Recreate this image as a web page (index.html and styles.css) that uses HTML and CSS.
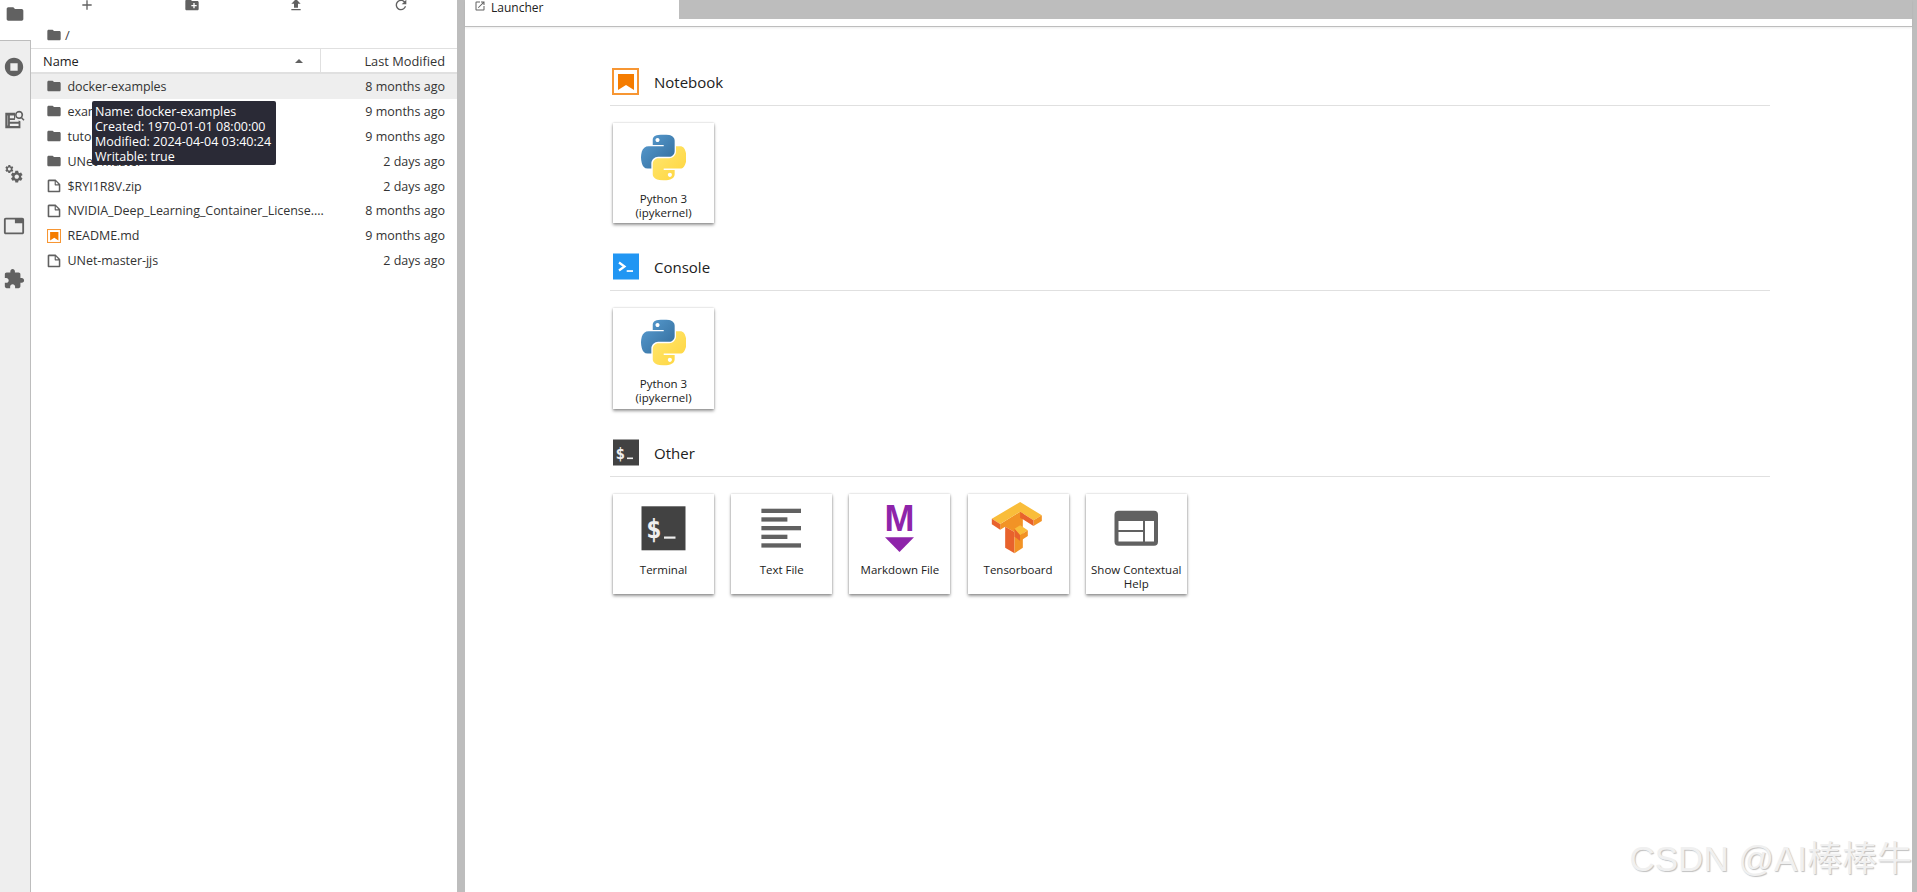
FILE: index.html
```html
<!DOCTYPE html>
<html lang="en">
<head>
<meta charset="utf-8">
<title>JupyterLab</title>
<link rel="stylesheet" href="styles.css">
</head>
<body>
<svg class="defs" width="0" height="0">
  <defs>
    <linearGradient id="pyb" x1="0" y1="0" x2="1" y2="1"><stop offset="0" stop-color="#5a9fd4"/><stop offset="1" stop-color="#306998"/></linearGradient>
    <linearGradient id="pyy" x1="0" y1="0" x2="1" y2="1"><stop offset="0" stop-color="#ffe873"/><stop offset="1" stop-color="#ffd43b"/></linearGradient>
    <symbol id="python" viewBox="0 0 110 112">
      <path fill="url(#pyb)" d="M54.9 0C50.3 0 46 .4 42.1 1.1 30.8 3.1 28.7 7.3 28.7 15v10.2h26.8v3.4H18.6c-7.8 0-14.6 4.7-16.7 13.6-2.5 10.2-2.6 16.6 0 27.3 1.9 7.9 6.5 13.6 14.2 13.6h9.2V71c0-8.8 7.7-16.7 16.8-16.7h26.8c7.4 0 13.4-6.1 13.4-13.6V15.2c0-7.3-6.1-12.7-13.4-13.9C64.3.3 59.5 0 54.9 0zM40.4 8.2c2.8 0 5 2.3 5 5.1 0 2.8-2.3 5.1-5 5.1-2.8 0-5-2.3-5-5.1 0-2.8 2.2-5.1 5-5.1z"/>
      <path fill="url(#pyy)" d="M85.6 28.7v11.9c0 9.2-7.8 17-16.7 17H42.1c-7.3 0-13.4 6.3-13.4 13.6v25.5c0 7.3 6.3 11.5 13.4 13.6 8.5 2.5 16.6 2.9 26.8 0 6.8-2 13.4-5.9 13.4-13.6V86.5H55.5v-3.4h40.2c7.8 0 10.7-5.4 13.4-13.6 2.8-8.4 2.7-16.5 0-27.3-1.9-7.8-5.6-13.6-13.4-13.6zM70.6 93.3c2.8 0 5 2.3 5 5.1 0 2.8-2.3 5.1-5 5.1-2.8 0-5-2.3-5-5.1 0-2.8 2.2-5.1 5-5.1z"/>
    </symbol>
    <symbol id="folder" viewBox="0 0 24 24"><path d="M10 4H4c-1.1 0-1.99.9-1.99 2L2 18c0 1.1.9 2 2 2h16c1.1 0 2-.9 2-2V8c0-1.1-.9-2-2-2h-8l-2-2z"/></symbol>
    <symbol id="file" viewBox="0 0 22 22"><path d="M19.3 8.2l-5.5-5.5c-.3-.3-.7-.5-1.2-.5H3.9c-.8.1-1.6.9-1.6 1.8v14.1c0 .9.7 1.6 1.6 1.6h14.2c.9 0 1.6-.7 1.600-1.600V9.400c.1-.5-.1-.9-.4-1.200zm-5.800-3.300l3.400 3.600h-3.400V4.900zm3.900 12.700H4.700c-.1 0-.2 0-.2-.2V4.700c0-.2.1-.3.2-.3h7.200v4.400s0 .8.300 1.100c.3.3 1.100.3 1.100.3h4.300v7.200s-.1.2-.2.2z"/></symbol>
    <symbol id="notebook" viewBox="0 0 27 27"><rect x="1" y="1" width="25" height="25" fill="none" stroke="#f57c00" stroke-opacity=".8" stroke-width="2"/><path fill="#f57c00" d="M6 6h16v16l-8-5-8 5z"/></symbol>
    <symbol id="gear" viewBox="0 0 24 24"><path d="M19.14 12.94c.04-.3.06-.61.06-.94 0-.32-.02-.64-.07-.94l2.03-1.58c.18-.14.23-.41.12-.61l-1.92-3.32c-.12-.22-.37-.29-.59-.22l-2.39.96c-.5-.38-1.03-.7-1.62-.94l-.36-2.54c-.04-.24-.24-.41-.48-.41h-3.84c-.24 0-.43.17-.47.41l-.36 2.54c-.59.24-1.13.57-1.62.94l-2.39-.96c-.22-.08-.47 0-.59.22L2.74 8.87c-.12.21-.08.47.12.61l2.03 1.58c-.05.3-.09.63-.09.94s.02.64.07.94l-2.03 1.58c-.18.14-.23.41-.12.61l1.92 3.32c.12.22.37.29.59.22l2.39-.96c.5.38 1.03.7 1.62.94l.36 2.54c.05.24.24.41.48.41h3.84c.24 0 .44-.17.47-.41l.36-2.54c.59-.24 1.13-.56 1.62-.94l2.39.96c.22.08.47 0 .59-.22l1.92-3.32c.12-.22.07-.47-.12-.61l-2.01-1.58zM12 15.6c-1.98 0-3.6-1.62-3.6-3.6s1.62-3.6 3.6-3.6 3.6 1.62 3.6 3.6-1.62 3.6-3.6 3.6z"/></symbol>
  </defs>
</svg>

<div class="app">
  <nav class="rail">
    <div class="rail-top">
      <svg class="rail-icon" viewBox="0 0 24 24"><use href="#folder"/></svg>
    </div>
    <div class="rail-rest">
      <svg class="rail-icon" viewBox="0 0 24 24"><path d="M12 2C6.480 2 2 6.480 2 12s4.480 10 10 10 10-4.480 10-10S17.520 2 12 2zm4 14H8V8h8v8z"/></svg>
      <svg class="rail-icon" viewBox="0 0 24 24"><path fill-rule="evenodd" d="M2.500 4h11v2.500a7 7 0 0 0 0 3.500H13v2H7.500v2H17v-1.500l2 .8V21H2.500zM5 7v11h.5V7zm2.500 0v3H12V7zm0 9v2.500H17V16z"/><path fill-rule="evenodd" d="M17.500 2a4.500 4.500 0 0 1 3.600 7.200l2.400 2.400-1.200 1.200-2.400-2.400A4.500 4.500 0 1 1 17.500 2zm0 1.800a2.700 2.700 0 1 0 0 5.400 2.700 2.700 0 0 0 0-5.400z"/></svg>
      <svg class="rail-icon" viewBox="0 0 24 24"><use href="#gear" x="1.400" y="2.200" width="11" height="11"/><use href="#gear" x="7" y="8" width="16" height="16"/></svg>
      <svg class="rail-icon" viewBox="0 0 24 24"><path d="M21 3H3c-1.100 0-2 .9-2 2v14c0 1.100.9 2 2 2h18c1.100 0 2-.9 2-2V5c0-1.100-.9-2-2-2zm0 16H3V5h10v4h8v10z"/></svg>
      <svg class="rail-icon" viewBox="0 0 24 24"><path d="M20.500 11H19V7c0-1.100-.9-2-2-2h-4V3.500C13 2.120 11.880 1 10.500 1S8 2.120 8 3.500V5H4c-1.100 0-1.990.9-1.990 2v3.800H3.500c1.490 0 2.700 1.210 2.700 2.700s-1.210 2.700-2.700 2.700H2V20c0 1.100.9 2 2 2h3.800v-1.500c0-1.490 1.210-2.700 2.700-2.700 1.490 0 2.700 1.210 2.700 2.700V22H17c1.100 0 2-.9 2-2v-4h1.500c1.380 0 2.500-1.120 2.500-2.500S21.880 11 20.500 11z"/></svg>
    </div>
  </nav>

  <section class="files">
    <div class="toolbar">
      <svg class="tool" viewBox="0 0 24 24"><path d="M19 13h-6v6h-2v-6H5v-2h6V5h2v6h6v2z"/></svg>
      <svg class="tool" viewBox="0 0 24 24"><path d="M20 6h-8l-2-2H4c-1.110 0-1.990.89-1.990 2L2 18c0 1.110.89 2 2 2h16c1.110 0 2-.89 2-2V8c0-1.110-.89-2-2-2zm-1 8h-3v3h-2v-3h-3v-2h3V9h2v3h3v2z"/></svg>
      <svg class="tool" viewBox="0 0 24 24"><path d="M9 16h6v-6h4l-7-7-7 7h4zm-4 2h14v2H5z"/></svg>
      <svg class="tool" viewBox="0 0 24 24"><path d="M17.650 6.350C16.200 4.900 14.210 4 12 4c-4.420 0-7.990 3.580-7.990 8s3.570 8 7.990 8c3.730 0 6.840-2.550 7.730-6h-2.080c-.82 2.330-3.040 4-5.650 4-3.310 0-6-2.690-6-6s2.690-6 6-6c1.660 0 3.140.69 4.220 1.780L13 11h7V4l-2.350 2.350z"/></svg>
    </div>
    <div class="crumbs">
      <svg class="ficon" viewBox="0 0 24 24"><use href="#folder"/></svg>
      <span>/</span>
    </div>
    <div class="list-head">
      <div class="head-name">
        <span>Name</span>
        <svg class="caret" viewBox="0 0 10 5"><path d="M0 5 5 0l5 5z"/></svg>
      </div>
      <div class="head-mod">Last Modified</div>
    </div>
    <ul class="rows">
      <li class="row selected"><svg class="ficon" viewBox="0 0 24 24"><use href="#folder"/></svg><span class="fname">docker-examples</span><span class="fdate">8 months ago</span></li>
      <li class="row"><svg class="ficon" viewBox="0 0 24 24"><use href="#folder"/></svg><span class="fname">examples</span><span class="fdate">9 months ago</span></li>
      <li class="row"><svg class="ficon" viewBox="0 0 24 24"><use href="#folder"/></svg><span class="fname">tutorials</span><span class="fdate">9 months ago</span></li>
      <li class="row"><svg class="ficon" viewBox="0 0 24 24"><use href="#folder"/></svg><span class="fname">UNet-master</span><span class="fdate">2 days ago</span></li>
      <li class="row"><svg class="ficon" viewBox="0 0 22 22"><use href="#file"/></svg><span class="fname">$RYI1R8V.zip</span><span class="fdate">2 days ago</span></li>
      <li class="row"><svg class="ficon" viewBox="0 0 22 22"><use href="#file"/></svg><span class="fname">NVIDIA_Deep_Learning_Container_License....</span><span class="fdate">8 months ago</span></li>
      <li class="row"><svg class="ficon nb" viewBox="0 0 27 27"><use href="#notebook"/></svg><span class="fname">README.md</span><span class="fdate">9 months ago</span></li>
      <li class="row"><svg class="ficon" viewBox="0 0 22 22"><use href="#file"/></svg><span class="fname">UNet-master-jjs</span><span class="fdate">2 days ago</span></li>
    </ul>
    <div class="tooltip">Name: docker-examples<br>Created: 1970-01-01 08:00:00<br>Modified: 2024-04-04 03:40:24<br>Writable: true</div>
  </section>

  <div class="splitter"></div>

  <main class="main">
    <div class="tabbar">
      <div class="tab">
        <svg class="tab-icon" viewBox="0 0 24 24"><path d="M19 19H5V5h7V3H5a2 2 0 0 0-2 2v14c0 1.100.9 2 2 2h14c1.100 0 2-.9 2-2v-7h-2v7zM14 3v2h3.590l-9.830 9.830 1.410 1.410L19 6.410V10h2V3h-7z"/></svg>
        <span>Launcher</span>
      </div>
      <div class="tab-fill"></div>
    </div>
    <div class="launcher">
      <section class="group">
        <header class="group-head">
          <svg class="group-icon" viewBox="0 0 27 27"><use href="#notebook"/></svg>
          <h2>Notebook</h2>
        </header>
        <div class="cards">
          <div class="card"><svg class="tile" viewBox="0 0 101 62"><use href="#python" x="28" y="11.500" width="45" height="46"/></svg><p>Python 3<br>(ipykernel)</p></div>
        </div>
      </section>
      <section class="group">
        <header class="group-head">
          <svg class="group-icon" viewBox="-1 0 27 26"><rect width="26" height="26" fill="#2196f3"/><path d="M6 9l5.500 4L6 17" fill="none" stroke="#fff" stroke-width="2.200"/><rect x="13.700" y="16.700" width="6.300" height="1.700" fill="#fff"/></svg>
          <h2>Console</h2>
        </header>
        <div class="cards">
          <div class="card"><svg class="tile" viewBox="0 0 101 62"><use href="#python" x="28" y="11.500" width="45" height="46"/></svg><p>Python 3<br>(ipykernel)</p></div>
        </div>
      </section>
      <section class="group">
        <header class="group-head">
          <svg class="group-icon" viewBox="-1 0 27 26"><rect width="26" height="26" fill="#424242"/><text x="2.500" y="19" class="term-small">$</text><rect x="14" y="18" width="6" height="1.600" fill="#eee"/></svg>
          <h2>Other</h2>
        </header>
        <div class="cards">
          <div class="card">
            <svg class="tile" viewBox="0 0 101 62"><rect x="28.500" y="12.300" width="44" height="44" fill="#424242"/><text x="33" y="44" class="term-big">$</text><rect x="51" y="42.500" width="11.500" height="2.200" fill="#eee"/></svg>
            <p>Terminal</p>
          </div>
          <div class="card">
            <svg class="tile" viewBox="0 0 101 62" fill="#616161"><rect x="30.400" y="14.700" width="39.600" height="4.300"/><rect x="30.400" y="23.300" width="26" height="4.300"/><rect x="30.400" y="32" width="39.600" height="4.300"/><rect x="30.400" y="40.700" width="26" height="4.300"/><rect x="30.400" y="49.300" width="39.600" height="4.300"/></svg>
            <p>Text File</p>
          </div>
          <div class="card">
            <svg class="tile" viewBox="0 0 101 62"><text x="50.500" y="37.300" class="md-m">M</text><path d="M36 43.300h29L50.500 58z" fill="#8e24aa"/></svg>
            <p>Markdown File</p>
          </div>
          <div class="card">
            <svg class="tile" viewBox="0 0 101 62">
              <g transform="translate(10.500 2) scale(.3333)">
                <polygon fill="#f29325" points="65,84 125,47 133,52 133,92 108,108 80,92 65,101"/>
                <polygon fill="#f9bd3a" points="40,68 125,18 190,58 165,73 125,47 65,84"/>
                <polygon fill="#e8622c" points="40,68 65,84 65,101 40,85"/>
                <polygon fill="#f29325" points="165,73 190,58 190,75 165,90"/>
                <polygon fill="#e8622c" points="125,47 165,73 165,90 133,70 125,66"/>
                <polygon fill="#e8622c" points="80,92 108,108 108,172 80,155"/>
                <polygon fill="#f29325" points="108,108 133,92 133,155 108,172"/>
                <polygon fill="#f9bd3a" points="108,98 125,88 148,103 125,118"/>
                <polygon fill="#e8622c" points="108,98 125,118 125,135 108,122"/>
                <polygon fill="#f29325" points="125,118 148,103 148,120 125,135"/>
              </g>
            </svg>
            <p>Tensorboard</p>
          </div>
          <div class="card">
            <svg class="tile" viewBox="0 0 101 62"><rect x="28.500" y="16.700" width="43.500" height="35" rx="4" fill="#616161"/><rect x="32.500" y="27" width="24.500" height="9" fill="#fff"/><rect x="32.500" y="38" width="24.500" height="9.500" fill="#fff"/><rect x="59" y="27" width="9" height="20.500" fill="#fff"/></svg>
            <p>Show Contextual Help</p>
          </div>
        </div>
      </section>
    </div>
  </main>
</div>
<div class="watermark">CSDN @AI棒棒牛</div>
</body>
</html>
```

FILE: styles.css
```css
* { box-sizing: border-box; }
html, body { margin: 0; height: 100%; overflow: hidden; background: #fff; }
body {
  font-family: "Open Sans", "Noto Sans", "Liberation Sans", sans-serif;
  font-size: 12px;
  color: #212121;
}
.defs { position: absolute; }
.app { display: flex; height: 892px; }

.rail { width: 31px; flex: none; display: flex; flex-direction: column; }
.rail-top { height: 40px; padding: 4px 0 0 5px; }
.rail-rest {
  flex: 1;
  background: #eee;
  border-top: 1px solid #bdbdbd;
  border-right: 1px solid #bdbdbd;
  display: flex;
  flex-direction: column;
  align-items: flex-start;
  padding: 15px 0 0 3px;
  gap: 31px;
}
.rail-icon { width: 22px; height: 22px; fill: #616161; display: block; flex: none; }
.rail-top .rail-icon { width: 20px; height: 20px; }

.files { width: 426px; flex: none; position: relative; display: flex; flex-direction: column; }
.toolbar { height: 13px; display: flex; align-items: flex-end; overflow: hidden; padding-left: 48px; flex: none; }
.tool { width: 16px; height: 16px; fill: #616161; flex: none; margin-right: 88.700px; }
.crumbs { height: 35px; display: flex; align-items: center; padding: 8px 0 0 15px; gap: 3px; color: #424242; font-size: 13px; flex: none; }
.ficon { width: 16px; height: 16px; fill: #616161; flex: none; display: block; }
.ficon.nb { width: 14px; height: 14px; margin: 0 1px; }
.list-head {
  height: 26px;
  display: flex;
  border-top: 1px solid #e0e0e0;
  border-bottom: 2px solid #e0e0e0;
  font-size: 12.800px;
  flex: none;
}
.head-name { width: 290px; display: flex; align-items: center; justify-content: space-between; padding: 1px 17px 0 12px; border-right: 1px solid #e0e0e0; }
.head-mod { flex: 1; text-align: right; padding: 1px 12px 0 0; align-self: center; color: #333; }
.caret { width: 8px; height: 4px; fill: #616161; }
.rows { list-style: none; margin: 0; padding: 0; }
.row { height: 24.900px; display: flex; align-items: center; padding: 0 12px 0 15px; font-size: 12.500px; color: #333; }
.row.selected { background: #eee; }
.fname { margin-left: 5.500px; flex: 1; white-space: nowrap; letter-spacing: -.05px; }
.fdate { white-space: nowrap; }

.tooltip {
  position: absolute;
  left: 61px;
  top: 101px;
  width: 184px;
  height: 64px;
  padding: 3px 3px;
  background: #2a2a36;
  color: #fff;
  border-radius: 2px;
  font-size: 12.500px;
  line-height: 15px;
  white-space: nowrap;
}

.splitter { width: 8px; flex: none; background: #bdbdbd; }

.main { flex: 1; min-width: 0; display: flex; flex-direction: column; border-right: 5px solid #bdbdbd; }
.tabbar { height: 27px; flex: none; display: flex; border-bottom: 1px solid #bdbdbd; box-shadow: 0 1px 2px rgba(0,0,0,.08); }
.tab { width: 214px; display: flex; align-items: flex-start; padding: 0 0 0 9px; gap: 5px; font-size: 12px; line-height: 15px; }
.tab-icon { width: 12px; height: 12px; fill: #616161; flex: none; }
.tab-fill { flex: 1; height: 19px; background: #bdbdbd; }

.launcher { padding: 41px 142px 0 145px; }
.group { margin-bottom: 30.300px; }
.group-head { display: flex; align-items: center; height: 38px; padding: 0 0 10px 2px; border-bottom: 1px solid #e0e0e0; gap: 15px; }
.group-icon { width: 27px; height: 27px; flex: none; display: block; }
.group-head h2 { margin: 0; padding-top: 1px; font-weight: 400; font-size: 15px; color: #212121; }
.cards { display: flex; gap: 17.200px; padding: 16.700px 0 0 3px; }
.card {
  width: 101px;
  height: 100.500px;
  flex: none;
  background: #fff;
  box-shadow: 0 2px 3px rgba(0,0,0,.4), 0 0 2px rgba(0,0,0,.2);
  text-align: center;
}
.card p { margin: 7px 0 0; font-size: 11.500px; line-height: 14px; color: #212121; }
.tile { width: 101px; height: 62px; display: block; }
.term-big { font-family: "DejaVu Sans Mono", monospace; font-size: 26px; font-weight: 700; fill: #eee; }
.term-small { font-family: "DejaVu Sans Mono", monospace; font-size: 16px; font-weight: 700; fill: #eee; }
.md-m { font-family: "Liberation Sans", sans-serif; font-size: 36px; font-weight: 700; fill: #8e24aa; text-anchor: middle; }

.watermark {
  position: absolute;
  right: 5px;
  bottom: 12px;
  font-family: "Liberation Sans", "Noto Sans CJK SC", sans-serif;
  font-size: 35px;
  line-height: 42px;
  color: #f0f0f0;
  text-shadow: 1px 1px 1px rgba(0,0,0,.25);
  white-space: nowrap;
}
```
